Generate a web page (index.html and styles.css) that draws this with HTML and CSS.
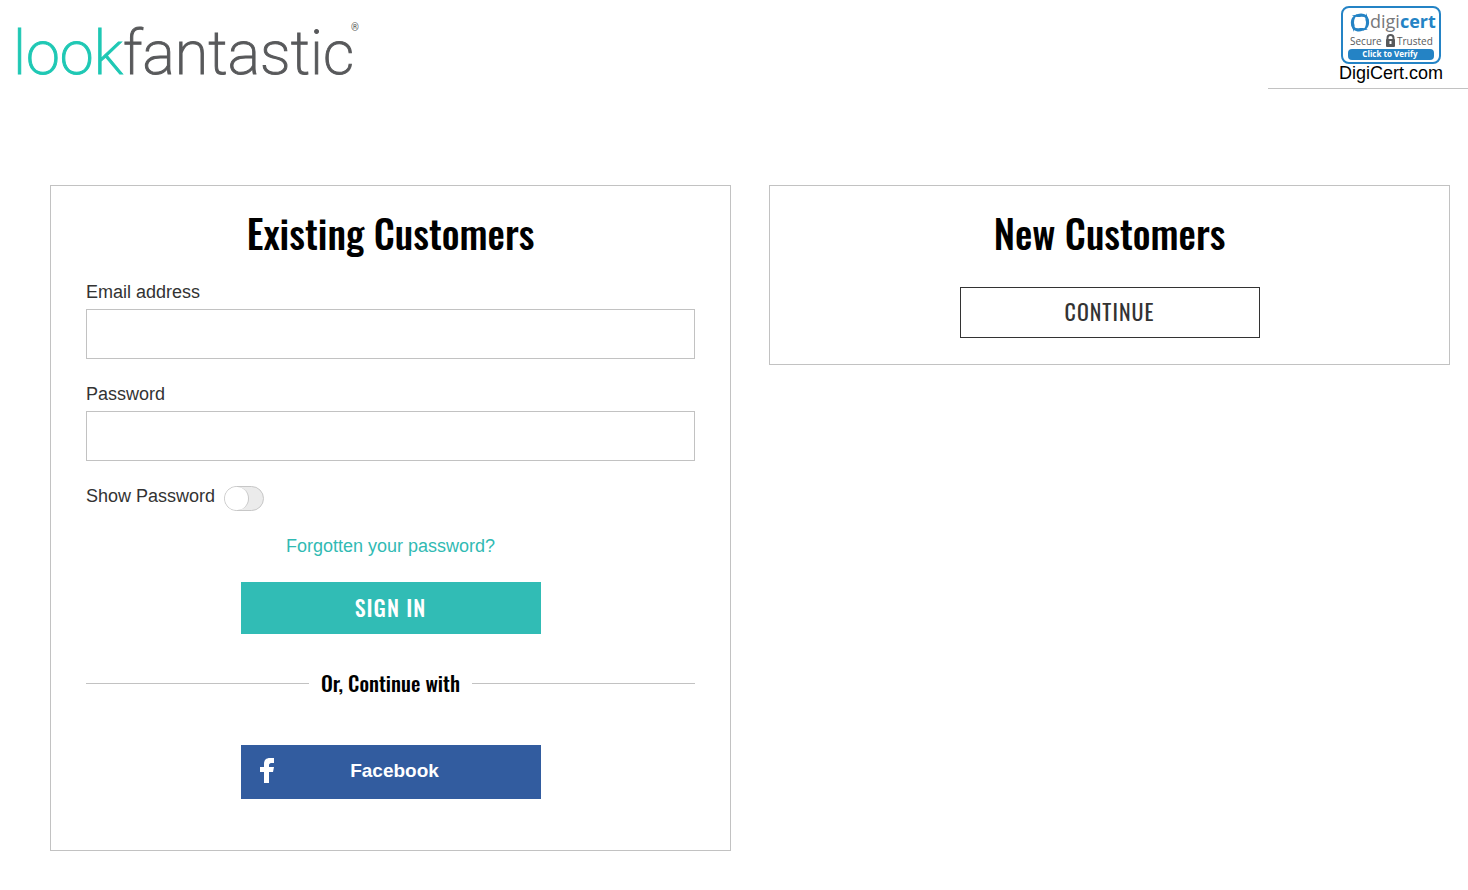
FILE: index.html
```html
<!DOCTYPE html>
<html lang="en">
<head>
<meta charset="utf-8">
<meta name="viewport" content="width=device-width, initial-scale=1">
<title>Sign in | lookfantastic</title>
<link rel="stylesheet" href="styles.css">
</head>
<body>
<header class="header">
  <a class="logo" href="#" aria-label="lookfantastic">
    <svg width="352" height="89" viewBox="0 0 352 89">
      <text class="logo-word" x="1" y="74"><tspan class="logo-look">look</tspan>fantastic</text>
      <text class="logo-mark" x="339" y="31">®</text>
    </svg>
  </a>
  <div class="seal">
    <svg class="seal-badge" width="102" height="58" viewBox="0 0 102 58" role="img" aria-label="DigiCert Secure Trusted, click to verify">
      <rect x="2" y="1" width="98" height="56" rx="7" fill="#fff" stroke="#2483c5" stroke-width="2"/>
      <g fill="#2483c5">
        <path d="M12 9c4 1 7-3 12-1 3 1 5 4 5 8-2-4-5-6-9-5-4 0-6 0-8-2z"/>
        <path d="M27 7c-1 4 3 6 2 11-1 4-3 6-7 7 3-3 4-5 4-9-1-3-1-6 1-9z"/>
        <path d="M28 24c-4-1-7 3-12 1-3-1-5-4-5-8 2 4 5 6 9 5 4 0 6 0 8 2z"/>
        <path d="M13 26c1-4-3-6-2-11 1-4 3-6 7-7-3 3-4 5-4 9 1 3 1 6-1 9z"/>
      </g>
      <text class="seal-name" x="30" y="22">digi<tspan class="seal-cert">cert</tspan></text>
      <text class="seal-words" x="10" y="39">Secure</text>
      <text class="seal-words" x="57" y="39">Trusted</text>
      <path d="M47.500 34v-2a3 3 0 0 1 6 0v2" fill="none" stroke="#58595b" stroke-width="2"/>
      <rect x="46" y="33" width="9" height="8" rx="1" fill="#58595b"/>
      <path d="M50.500 35v3" stroke="#fff" stroke-width="2"/>
      <rect x="8" y="43" width="86" height="11" rx="4" fill="#2483c5"/>
      <text class="seal-verify" x="50" y="51" text-anchor="middle">Click to Verify</text>
    </svg>
    <a class="seal-link" href="#">DigiCert.com</a>
  </div>
</header>
<main class="columns">
  <section class="card card-existing">
    <h2 class="title">Existing Customers</h2>
    <form class="form">
      <label class="label" for="email">Email address</label>
      <input class="field" id="email" type="email">
      <label class="label" for="password">Password</label>
      <input class="field" id="password" type="password">
      <div class="show">
        <label for="show">Show Password</label>
        <input class="toggle" id="show" type="checkbox">
      </div>
      <a class="forgot" href="#">Forgotten your password?</a>
      <button class="button button-primary" type="submit">SIGN IN</button>
    </form>
    <h3 class="divider">Or, Continue with</h3>
    <button class="button button-facebook" type="button">
      <svg width="14" height="26" viewBox="0 0 14 26" aria-hidden="true"><path d="M4 25V14H0V9h4V6c0-4 2-6 6-6h4v5h-3c-1 0-2 1-2 2v2h5l-1 5H9v11z" fill="#fff"/></svg>
      <span class="button-label">Facebook</span>
    </button>
  </section>
  <section class="card card-new">
    <h2 class="title">New Customers</h2>
    <button class="button button-outline" type="button">CONTINUE</button>
  </section>
</main>
</body>
</html>
```
FILE: styles.css
```css
*, *::before, *::after { box-sizing: border-box; }

body {
  margin: 0;
  background: #fff;
  color: #333;
  font: 18px/24px "Liberation Sans", Arial, sans-serif;
}

a { text-decoration: none; }

.header {
  display: flex;
  justify-content: space-between;
  align-items: flex-start;
  padding-left: 12px;
}

.logo svg { display: block; }
.logo-word { font: 200 61px Roboto, sans-serif; fill: #58595b; stroke: #58595b; stroke-width: 1px; }
.logo-look { fill: #1fc8b4; stroke: #1fc8b4; }
.logo-mark { font: 10px Roboto, sans-serif; fill: #58595b; }

.seal {
  display: flex;
  flex-direction: column;
  align-items: center;
  width: 200px;
  padding: 6px 0 6px 46px;
  border-bottom: 1px solid #c2c2c2;
}
.seal-badge { display: block; }
.seal-link { color: #000; line-height: 18px; }
.seal-name { font: 18px "Open Sans", sans-serif; fill: #77787b; }
.seal-cert { font-weight: 700; fill: #2483c5; }
.seal-words { font: 10px "Open Sans", sans-serif; fill: #58595b; }
.seal-verify { font: 700 8px "Open Sans", sans-serif; fill: #fff; }

.columns {
  display: grid;
  grid-template-columns: 1fr 1fr;
  gap: 38px;
  align-items: start;
  padding: 96px 18px 39px 50px;
}

.card {
  display: flex;
  flex-direction: column;
  align-items: center;
  padding: 22px 35px 26px;
  border: 1px solid #c2c2c2;
}
.card-existing { padding-bottom: 51px; }

.title {
  margin: 0 0 24px;
  color: #000;
  font: 500 39px/48px Oswald, "Liberation Sans Narrow", "Arial Narrow", sans-serif;
}
.card-new .title { margin-bottom: 31px; }

.form {
  display: flex;
  flex-direction: column;
  align-items: center;
  width: 100%;
}
.label { align-self: flex-start; margin-bottom: 5px; }
.field {
  width: 100%;
  height: 50px;
  margin: 0 0 23px;
  padding: 0 12px;
  border: 1px solid #c2c2c2;
  font: inherit;
}

.show {
  display: flex;
  align-self: flex-start;
  align-items: flex-start;
  gap: 9px;
}
.toggle {
  appearance: none;
  width: 40px;
  height: 25px;
  margin: 2px 0 0;
  border: 1px solid #c7c7c7;
  border-radius: 13px;
  background: #ebebeb;
}
.toggle::before {
  content: "";
  display: block;
  width: 24px;
  height: 23px;
  border-right: 1px solid #c7c7c7;
  border-radius: 12px;
  background: #fff;
}
.toggle:checked::before { margin-left: auto; }

.forgot { margin: 23px 0 24px; color: #31bab3; }

.button {
  width: 300px;
  max-width: 100%;
  height: 52px;
  padding: 0 0 3px;
  border: 0;
  font: 22px/30px Oswald, "Liberation Sans Narrow", "Arial Narrow", sans-serif;
  letter-spacing: 1px;
}
.button-primary { background: #31bcb5; color: #fff; font-weight: 500; }
.button-outline { border: 1px solid #333; background: #fff; color: #333; height: 51px; }
.button-facebook {
  display: flex;
  align-items: center;
  height: 54px;
  padding: 0 19px 2px;
  background: #325c9f;
  color: #fff;
  font: 700 19px/24px "Liberation Sans", Arial, sans-serif;
  letter-spacing: normal;
}
.button-label { flex: 1; padding-right: 6px; }

.divider {
  display: flex;
  align-items: center;
  gap: 12px;
  width: 100%;
  margin: 34px 0 47px;
  color: #000;
  font: 500 21px/30px Oswald, "Liberation Sans Narrow", "Arial Narrow", sans-serif;
}
.divider::before, .divider::after {
  content: "";
  flex: 1;
  border-top: 1px solid #c2c2c2;
}
```
